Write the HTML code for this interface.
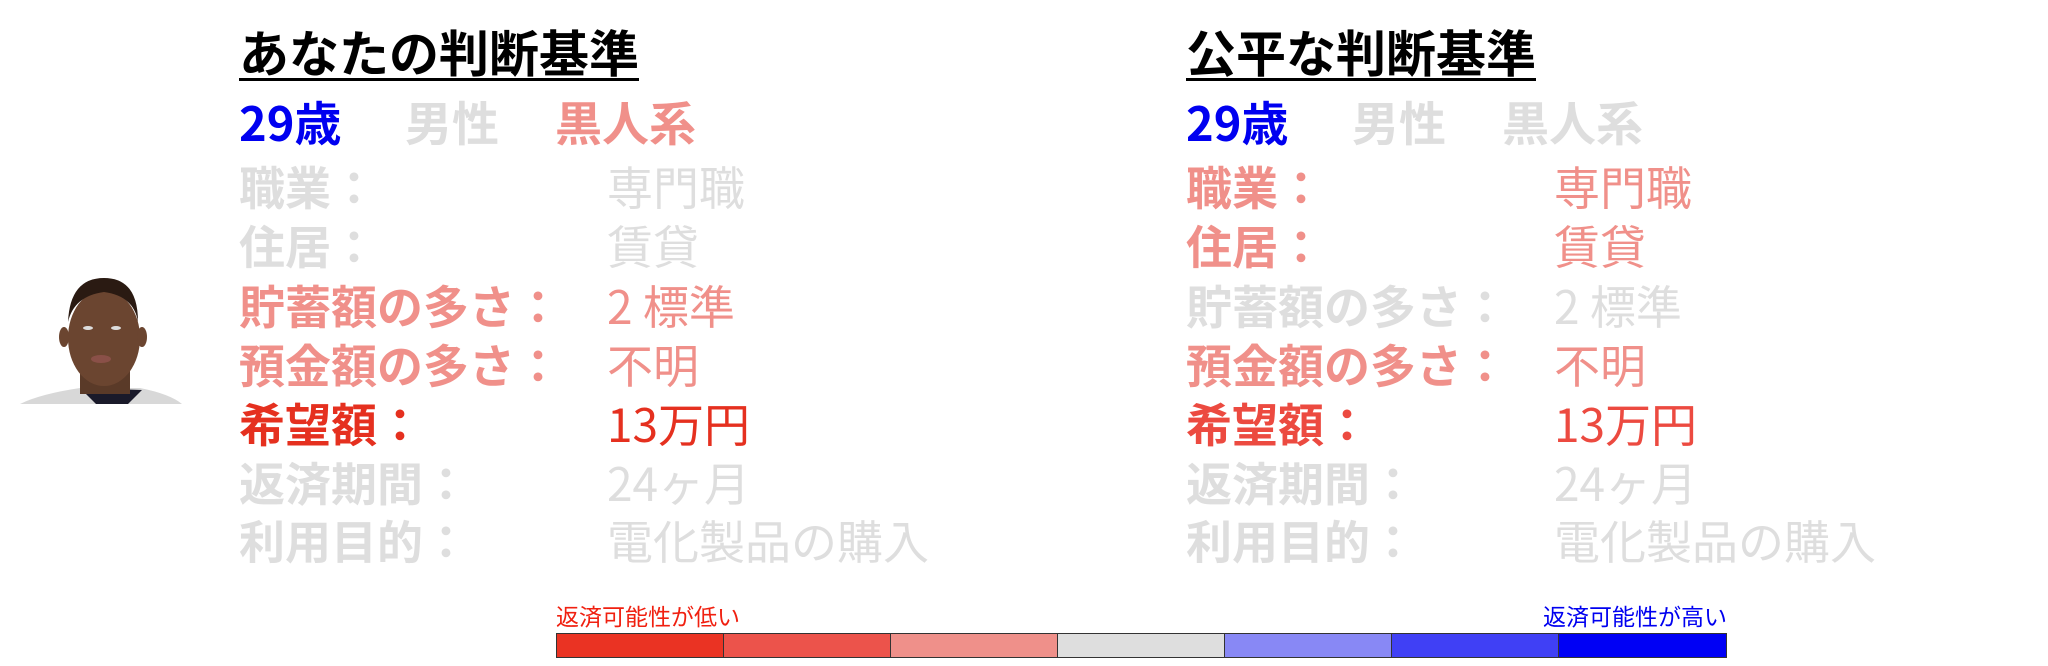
<!DOCTYPE html>
<html><head><meta charset="utf-8"><style>
body{margin:0;width:2048px;height:666px;background:#fff;position:relative;overflow:hidden;font-family:"Noto Sans CJK JP",sans-serif}
.t{position:absolute;white-space:nowrap;line-height:1}
.h{font-size:50px;font-weight:bold;color:#000;border-bottom:3px solid #000;padding-bottom:2px}
.b{font-weight:bold}
.r{font-size:46px;margin-top:-3px}
.g{color:#dedede}.p{color:#f0908a}.rd{color:#e8392c}.bl{color:#0000f0}
.bar{position:absolute;top:633px;height:25px;border:1px solid #333;box-sizing:border-box}
</style></head><body>
<div class="t h" style="left:239px;top:26px">あなたの判断基準</div>
<div class="t h" style="left:1186px;top:26px">公平な判断基準</div>

<div class="t b bl" style="left:239px;top:97px;font-size:47px">29歳</div>
<div class="t b g" style="left:405px;top:97px;font-size:47px">男性</div>
<div class="t b p" style="left:555px;top:97px;font-size:47px">黒人系</div>
<div class="t b bl" style="left:1186px;top:97px;font-size:47px">29歳</div>
<div class="t b g" style="left:1352px;top:97px;font-size:47px">男性</div>
<div class="t b g" style="left:1502px;top:97px;font-size:47px">黒人系</div>

<div class="t r b g" style="left:239px;top:166px">職業：</div><div class="t r g" style="left:607px;top:166px">専門職</div>
<div class="t r b g" style="left:239px;top:225px">住居：</div><div class="t r g" style="left:607px;top:225px">賃貸</div>
<div class="t r b p" style="left:239px;top:285px">貯蓄額の多さ：</div><div class="t r p" style="left:607px;top:285px">2 標準</div>
<div class="t r b p" style="left:239px;top:344px">預金額の多さ：</div><div class="t r p" style="left:607px;top:344px">不明</div>
<div class="t r b rd" style="left:239px;top:403px;color:#e5301f">希望額：</div><div class="t r rd" style="left:607px;top:403px;color:#e5301f">13万円</div>
<div class="t r b g" style="left:239px;top:462px">返済期間：</div><div class="t r g" style="left:607px;top:462px">24ヶ月</div>
<div class="t r b g" style="left:239px;top:520px">利用目的：</div><div class="t r g" style="left:607px;top:520px">電化製品の購入</div>

<div class="t r b p" style="left:1186px;top:166px">職業：</div><div class="t r p" style="left:1554px;top:166px">専門職</div>
<div class="t r b p" style="left:1186px;top:225px">住居：</div><div class="t r p" style="left:1554px;top:225px">賃貸</div>
<div class="t r b g" style="left:1186px;top:285px">貯蓄額の多さ：</div><div class="t r g" style="left:1554px;top:285px">2 標準</div>
<div class="t r b p" style="left:1186px;top:344px">預金額の多さ：</div><div class="t r p" style="left:1554px;top:344px">不明</div>
<div class="t r b rd" style="left:1186px;top:403px;color:#ec4a40">希望額：</div><div class="t r rd" style="left:1554px;top:403px;color:#ec4a40">13万円</div>
<div class="t r b g" style="left:1186px;top:462px">返済期間：</div><div class="t r g" style="left:1554px;top:462px">24ヶ月</div>
<div class="t r b g" style="left:1186px;top:520px">利用目的：</div><div class="t r g" style="left:1554px;top:520px">電化製品の購入</div>

<svg style="position:absolute;left:0;top:260px" width="220" height="160">
<path d="M20 144 Q40 134 80 128 L140 128 Q170 134 182 144 Z" fill="#d8d8d8"/>
<path d="M80 128 L96 144 L128 144 L142 130 Z" fill="#1a1a2a"/>
<rect x="80" y="100" width="50" height="34" fill="#5a3a28"/>
<ellipse cx="104" cy="78" rx="36" ry="48" fill="#6b4530"/>
<path d="M68 62 Q70 18 104 18 Q138 18 138 62 Q134 36 104 32 Q74 36 68 62Z" fill="#2a1a12"/>
<ellipse cx="64" cy="77" rx="5" ry="10" fill="#6b4530"/><ellipse cx="142" cy="77" rx="5" ry="10" fill="#6b4530"/>
<ellipse cx="88" cy="68" rx="5" ry="2" fill="#ddd"/><ellipse cx="116" cy="68" rx="5" ry="2" fill="#ddd"/>
<ellipse cx="101" cy="99" rx="10" ry="4" fill="#8a5048"/>
</svg>

<div class="t" style="left:556px;top:604px;font-size:23px;color:#f02010">返済可能性が低い</div>
<div class="t" style="right:321px;top:604px;font-size:23px;color:#0000f0">返済可能性が高い</div>
<div class="bar" style="left:556px;width:168px;background:#ea3323"></div>
<div class="bar" style="left:723px;width:168px;background:#ec534b"></div>
<div class="bar" style="left:890px;width:168px;background:#ef908a"></div>
<div class="bar" style="left:1057px;width:168px;background:#dedede"></div>
<div class="bar" style="left:1224px;width:168px;background:#8888f5"></div>
<div class="bar" style="left:1391px;width:168px;background:#4040f5"></div>
<div class="bar" style="left:1558px;width:169px;background:#0000f5"></div>
</body></html>
